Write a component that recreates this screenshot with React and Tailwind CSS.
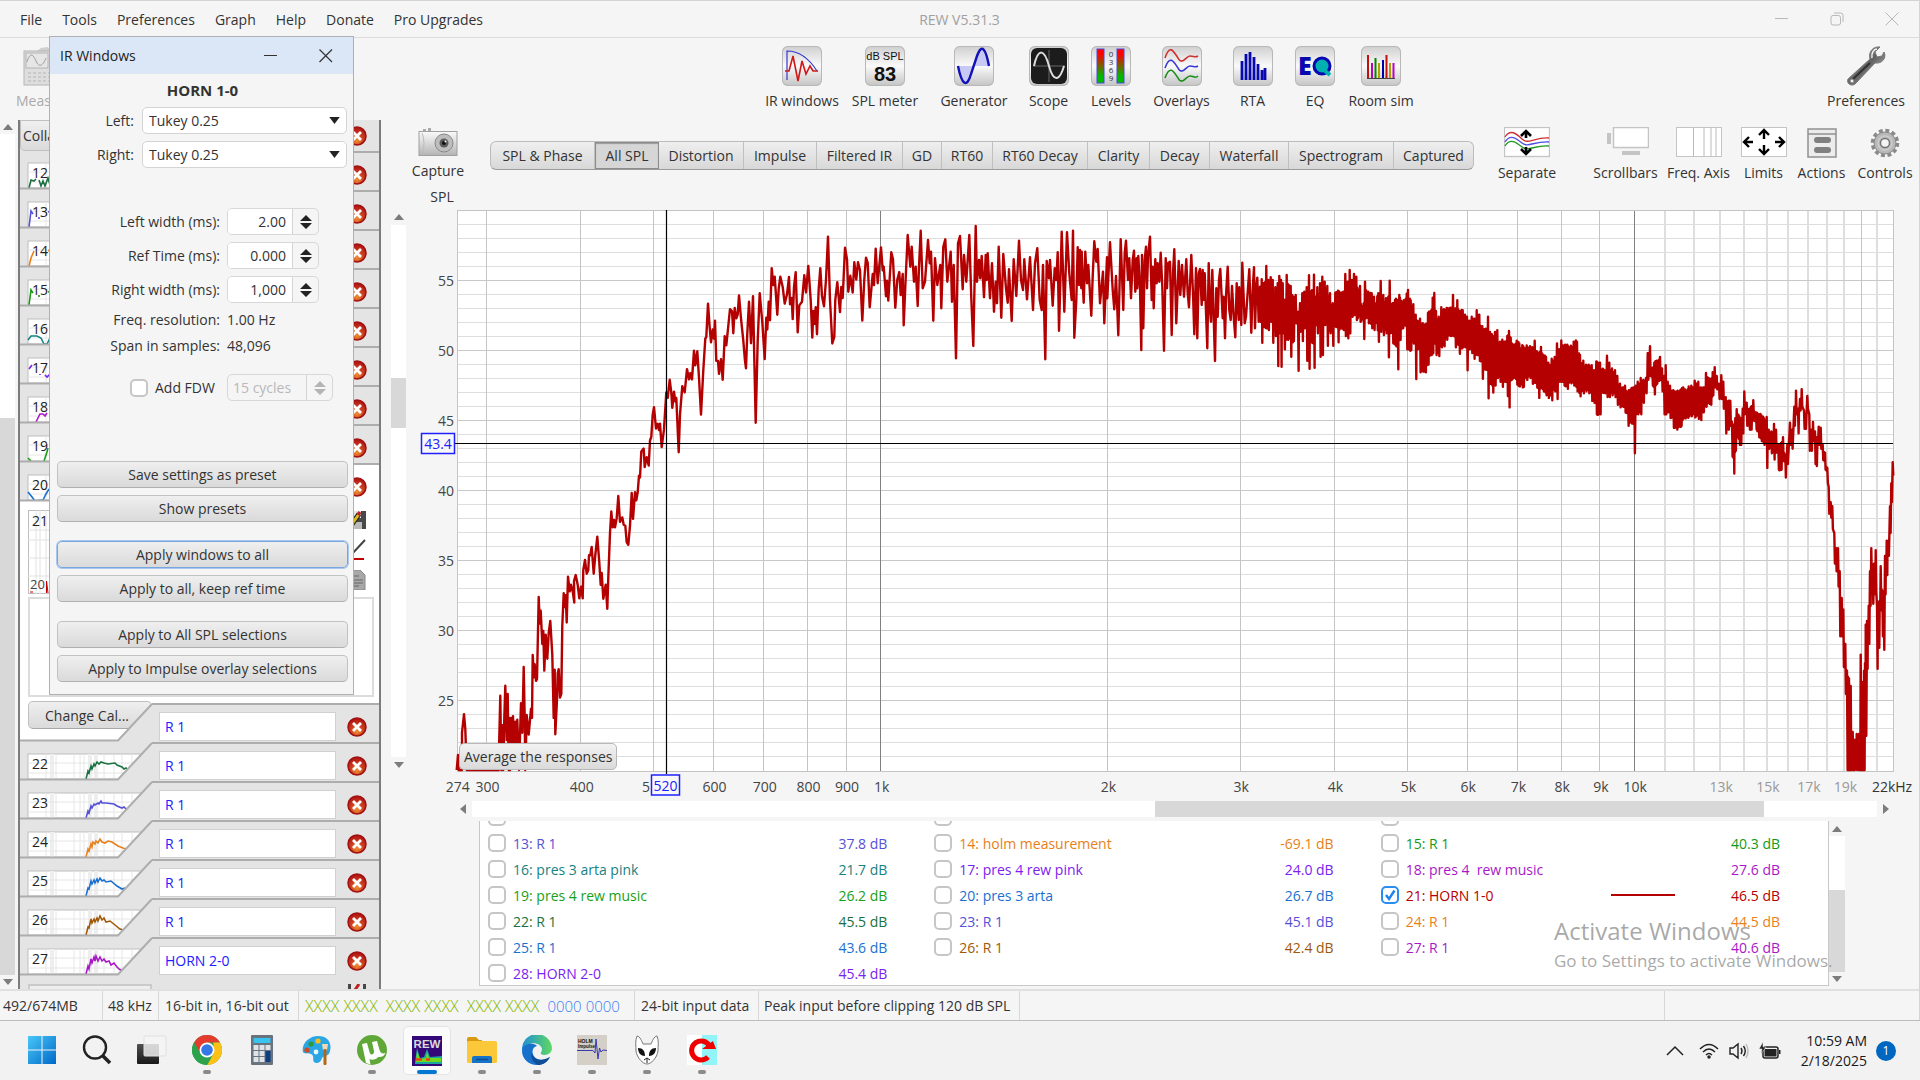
import React, { useState } from 'react';

// ----------------------------------------------------
// Data
// ----------------------------------------------------
const MENU = ['File', 'Tools', 'Preferences', 'Graph', 'Help', 'Donate', 'Pro Upgrades'];

const TABS = [
  ['SPL & Phase', 'w-[104px]'],
  ['All SPL', 'w-[64px]'],
  ['Distortion', 'w-[85px]'],
  ['Impulse', 'w-[73px]'],
  ['Filtered IR', 'w-[86px]'],
  ['GD', 'w-[39px]'],
  ['RT60', 'w-[51px]'],
  ['RT60 Decay', 'w-[95px]'],
  ['Clarity', 'w-[62px]'],
  ['Decay', 'w-[60px]'],
  ['Waterfall', 'w-[79px]'],
  ['Spectrogram', 'w-[105px]'],
  ['Captured', 'w-[79px]'],
];

const LEGEND = [
  { n: 10, color: '#00a000' },
  { n: 11, color: '#00a000' },
  { n: 12, color: '#1a7040' },
  { n: 13, name: 'R 1', db: '37.8 dB', color: '#5450d8' },
  { n: 14, name: 'holm measurement', db: '-69.1 dB', color: '#e8801a' },
  { n: 15, name: 'R 1', db: '40.3 dB', color: '#149a14' },
  { n: 16, name: 'pres 3 arta pink', db: '21.7 dB', color: '#158282' },
  { n: 17, name: 'pres 4 rew pink', db: '24.0 dB', color: '#7a22f0' },
  { n: 18, name: 'pres 4\u00a0 rew music', db: '27.6 dB', color: '#a818c8' },
  { n: 19, name: 'pres 4 rew music', db: '26.2 dB', color: '#18a018' },
  { n: 20, name: 'pres 3 arta', db: '26.7 dB', color: '#1a70d0' },
  { n: 21, name: 'HORN 1-0', db: '46.5 dB', color: '#b40000', on: true },
  { n: 22, name: 'R 1', db: '45.5 dB', color: '#1a7040' },
  { n: 23, name: 'R 1', db: '45.1 dB', color: '#5450d8' },
  { n: 24, name: 'R 1', db: '44.5 dB', color: '#e8801a' },
  { n: 25, name: 'R 1', db: '43.6 dB', color: '#1a70d0' },
  { n: 26, name: 'R 1', db: '42.4 dB', color: '#a05808' },
  { n: 27, name: 'R 1', db: '40.6 dB', color: '#a818c8' },
  { n: 28, name: 'HORN 2-0', db: '45.4 dB', color: '#7a22f0' },
];

// Thumbnail traces of the measurement list
const THUMBS_TOP = [
  { n: 12, next: 'R 1', color: '#1a7040', d: 'M11 37 L13 29 L16 30 L18 28 M21 29 L23 35 L25 30 L27 35 L30 27 L32 34' },
  { n: 13, next: 'holm measurement', color: '#5450d8', d: 'M11 37 L13 21 L15 24 M21 27 v2 M30 22 l3 -1' },
  { n: 14, next: 'R 1', color: '#e8801a', d: 'M11 37 L13 29 L16 22 M30 22 l3 -2' },
  { n: 15, next: 'pres 3 arta pink', color: '#149a14', d: 'M11 37 L13 22 L15 25 M21 27 v2 M30 24 l3 -1' },
  { n: 16, next: 'pres 4 rew pink', color: '#158282', d: 'M10 33 L13 29 L19 29 L23 31 L26 37 L29 37 L32 31' },
  { n: 17, next: 'pres 4 rew music', color: '#7a22f0', d: 'M11 23 L14 19 M22 28 v1 M27 29 L29 31 L32 28' },
  { n: 18, next: 'pres 4 rew music', color: '#a818c8', d: 'M18 37 L22 29 L25 29 L27 31 L29 28' },
  { n: 19, next: 'pres 3 arta', color: '#18a018', d: 'M10 34 L13 37 M26 37 L29 28 L30 24' },
  { n: 20, next: 'HORN 1-0', color: '#1a70d0', d: 'M10 29 L14 34 L17 38 L25 37 L28 31 L31 26', open: true },
];
const THUMBS_BOTTOM = [
  { n: 22, next: 'R 1', color: '#1a7040', d: 'M68 37 L70 29 L71 31 L73 24 L74 27 L76 22 L77 24 L79 20 L81 22 L83 20 L86 21 L90 22 L97 21 L99 23 L104 25 L106 27 L108 26 L110 28' },
  { n: 23, next: 'R 1', color: '#5450d8', d: 'M68 37 L70 30 L71 32 L73 25 L74 27 L76 23 L77 24 L80 22 L81 23 L83 20 L84 22 L88 22 L96 23 L99 25 L104 27 L106 26 L109 29' },
  { n: 24, next: 'R 1', color: '#e8801a', d: 'M68 37 L70 29 L71 31 L73 24 L74 27 L75 22 L77 24 L78 21 L80 23 L82 19 L84 22 L87 23 L90 21 L94 22 L100 26 L105 28 L108 29' },
  { n: 25, next: 'R 1', color: '#1a70d0', d: 'M68 37 L70 29 L71 30 L73 22 L74 25 L76 21 L77 24 L79 20 L80 23 L82 19 L84 22 L86 21 L88 23 L93 22 L99 27 L104 30 L107 29' },
  { n: 26, next: 'R 1', color: '#a05808', d: 'M68 37 L70 29 L71 30 L73 21 L74 25 L76 21 L77 24 L79 20 L80 23 L82 18 L84 22 L86 20 L88 24 L92 23 L97 27 L102 31 L105 32' },
  { n: 27, next: 'HORN 2-0', color: '#a818c8', d: 'M68 37 L70 29 L71 32 L73 22 L74 26 L76 20 L77 24 L78 19 L80 24 L82 20 L84 24 L86 22 L88 25 L91 24 L93 28 L96 26 L99 30 L101 32 L104 34' },
];

// ----------------------------------------------------
// Response trace. Coordinates are in thirds of a pixel.
// ----------------------------------------------------
const LOW = [50,1543,54,1500,56,1543,66,1543,66,1440,72,1390,76,1430,80,1543,84,1541,176,1543,178,1450,181,1340,184,1543,187,1420,190,1543,193,1400,196,1313,200,1460,203,1335,206,1543,208,1400,210,1543,213,1400,216,1520,219,1395,222,1520,226,1410,229,1520,232,1405,237,1543,243,1360,247,1440,251,1262,254,1400,256,1543,260,1392,266,1445,273,1375,276,1400,278,1230,282,1290,284,1255,288,1300,291,1295,296,1073,299,1145,302,1110,307,1200,310,1165,313,1272,317,1175,322,1240,326,1170,331,1138,337,1230,341,1400,344,1270,346,1444,351,1350,353,1280,356,1268,360,1345,364,1335,367,1150,371,1063,374,1100,377,1068,380,1142,384,1018,389,1058,393,1040,398,1058,403,1088,402,1030,407,1014,413,1040,418,1077,423,1045,428,1077,430,1000,435,973,440,1010,445,1000,447,960,451,960,455,938,461,1010,466,960,472,910,478,980,482,1040,485,1008,490,1078,497,1040,502,1105,505,1020,510,900,514,842,518,885,522,865,525,885,530,860,535,800,540,870,547,858,551,878,556,880,560,925,565,932,570,880,575,792,579,862,585,790,589,812,593,790,597,745,600,750,604,680,611,672,614,722,620,695,626,718,630,650,634,640,638,580,642,560,648,618,653,605,657,622,660,605,665,668,672,620,679,520,683,535,689,486,694,520,697,562,702,518,706,545,709,535,716,682,720,580,727,503,734,520,741,457,747,485,751,468,756,485,762,407,766,447,772,409,777,480,783,580,790,460,796,375,799,370,804,280,809,345,813,385,818,350,822,375,825,326,829,435,834,435,837,470,843,430,848,486,854,368,859,393,865,340,870,295,876,300,880,360,884,292,889,320,893,310,897,258,903,320,910,380,915,435,918,455,922,360,927,275,933,387,939,260,943,430,947,602,953,380,959,252,967,330,974,430,979,318,982,350,986,275,990,325,995,184,1000,230,1004,207,1012,310,1016,240,1021,207,1028,235,1034,280,1041,255,1047,208,1050,282,1055,265,1058,322,1062,235,1067,195,1073,358,1078,285,1086,275,1093,203,1098,250,1105,178,1112,270,1117,372,1120,300,1124,335,1127,290,1131,363,1136,240,1141,184,1146,260,1152,287,1158,215,1164,99,1170,270,1177,388,1183,370,1186,270,1192,222,1200,303,1204,235,1208,265,1215,129,1221,160,1225,248,1231,205,1238,250,1243,168,1249,215,1254,168,1260,190,1267,326,1273,215,1278,156,1283,170,1289,290,1298,200,1302,230,1307,132,1313,225,1323,128,1328,190,1331,180,1338,260,1341,218,1345,272,1354,141,1359,160,1366,291,1372,215,1378,195,1382,257,1388,200];

const MID = [11,376,16,260,23,105,31,200,35,140,42,245,47,200,53,318,57,200,62,92,68,265,75,245,84,120,89,190,93,155,100,362,105,175,112,255,121,195,124,325,130,140,136,118,142,245,152,155,156,305,161,195,168,475,174,130,180,108,188,268,192,165,199,245,208,105,214,295,220,438,227,78,231,245,237,180,241,235,245,168,252,292,257,165,260,240,263,160,270,295,276,190,282,335,287,245,291,310,296,140,304,353,310,162,318,265,323,308,327,208,335,363,341,178,349,288,357,122,363,240,369,270,373,178,381,298,390,172,399,330,405,190,412,145,419,300,425,330,429,195,436,478,440,183,447,235,450,180,458,317,464,205,469,240,473,157,477,392,485,95,493,335,501,97,508,220,515,300,519,92,523,413,529,300,533,142,537,255,540,150,544,265,545,155,548,250,551,308,556,155,561,250,565,195,574,347,578,230,583,124,589,185,593,147,600,310,609,215,613,370,621,172,622,295,630,127,638,270,643,328,648,228,655,406,662,118,670,330,674,160,678,122,684,240,688,175,693,295,698,180,702,152,706,275,710,175,712,265,715,168,720,262,724,450,726,165,730,385,734,180,738,140,741,265,744,170,750,110,755,300,758,200,761,325,766,178,770,250,773,190,778,245,782,158,787,260,792,452,797,175,801,265,804,190,810,185,815,405,819,220,823,148,829,370,836,183,841,285,846,195,852,290,859,178,863,280,867,322,874,165,879,280,883,403,888,205,892,415,896,220,900,207,905,315,908,210,911,300,914,220,918,335,922,445,926,190,930,330,933,365,937,210,945,483,949,265,953,350,957,240,961,207,968,355,971,290,975,415,979,270,983,200,988,330,992,360,996,258,1001,350,1006,412,1010,250,1016,360,1018,262,1024,375,1027,188,1034,370,1038,350,1048,208,1054,398,1058,270,1062,202,1065,385,1069,260,1072,233,1076,365];

// [x, top, bottom] triples: where the trace is denser than the pixels
const HIGH_A = [1080,260,365,1085,238,428,1092,250,380,1099,198,385,1105,240,390,1112,232,365,1118,240,428,1126,262,408,1133,250,498,1138,228,400,1143,240,500,1148,250,400,1153,300,448,1160,225,418,1166,255,415,1172,258,470,1180,290,423,1187,285,370,1194,335,512,1200,310,395,1207,280,423,1213,275,385,1220,262,482,1227,226,506,1233,275,425,1242,224,503,1247,290,375,1252,262,400,1260,250,470,1267,230,465,1274,245,375,1282,258,437,1290,280,400,1298,310,437,1306,278,380,1314,272,427,1322,278,385,1330,275,390,1336,222,408,1343,245,415,1349,210,400,1356,240,350,1362,222,345,1369,230,360,1380,258,365,1391,310,417,1395,245,350,1405,275,370,1415,280,385,1422,290,390,1435,280,425,1442,243,395,1450,285,405,1458,295,400,1465,290,472,1469,242,400,1478,310,430,1485,300,435,1493,300,508,1498,285,420];
const HIGH_B = [0,255,365,8,265,335,15,262,325,20,245,390,24,235,390,32,262,392,40,272,375,47,300,468,52,315,390,60,310,450,68,322,448,76,325,450,84,295,430,92,290,405,98,255,400,103,243,375,108,290,405,116,305,408,124,280,385,132,285,382,140,282,365,150,282,355,159,248,355,166,285,385,172,262,375,178,290,402,188,288,385,195,300,385,201,305,445,208,315,390,215,305,400,222,310,415,230,288,405,238,300,420,247,330,467,254,340,440,264,305,518,270,345,480,278,355,503,285,345,485,292,340,465,300,370,475,307,365,488,314,370,475,322,355,512,327,342,542,332,360,470,340,378,465,350,368,482,358,375,487,370,382,488,380,380,470,390,382,465,397,385,480,404,368,478,410,395,490,416,400,517,423,384,490,430,405,500,438,410,510,445,425,517,455,415,523,464,410,500,471,375,520,478,390,475,484,367,475,492,380,485,502,378,493,510,385,475,521,370,485,531,370,500,540,405,513,550,420,505,558,430,500,566,430,505,575,432,525,582,445,530,589,422,560,600,425,560,606,445,500,614,445,505,621,407,515,628,425,515,636,440,510,645,445,515,652,460,535,660,480,542,668,490,540,675,485,555,684,500,590,692,495,580,700,490,585,703,490,662,707,485,560,713,475,560,722,465,560,730,470,530,738,465,505,743,400,470,750,382,460,757,440,485,763,425,508,770,420,480,780,410,470,786,440,500,792,460,560,797,432,560,803,475,555,810,485,570,820,497,595,830,500,600,838,500,592,843,495,590,850,490,570,858,498,568,866,487,565,874,485,565,884,472,568,895,475,572,902,490,575,910,490,555,918,452,540,925,465,530,932,470,535,938,450,510,944,437,490,950,460,495,957,480,520,964,458,520,970,475,545,977,515,610,985,525,600,991,525,590,996,580,670,1001,590,715,1006,570,655,1010,547,620,1018,565,640,1022,570,640,1028,545,610,1033,500,560,1040,530,590,1048,545,600,1053,540,600,1060,523,575,1068,555,600,1076,560,620,1084,562,630,1092,570,640,1100,567,700,1106,600,650,1114,605,662,1122,585,678,1128,600,660,1135,640,705,1143,635,705,1149,620,680,1156,665,725,1162,640,690,1170,582,640,1176,600,650,1183,540,590,1188,498,560,1194,545,610,1200,520,550,1205,494,540,1212,550,598,1216,560,598,1222,512,545,1228,560,655,1234,600,655,1239,580,630,1245,605,690,1249,620,695,1256,592,640,1262,595,650,1268,640,680,1275,660,705,1282,700,740,1286,750,820,1292,790,830,1297,800,860,1303,870,950,1308,910,970,1314,910,1010,1319,970,1140,1325,1040,1140,1330,1070,1220,1336,1160,1290,1341,1230,1492,1347,1250,1492,1352,1270,1492,1358,1390,1492,1363,1410,1492,1370,1395,1492,1377,1395,1492,1382,1188,1492,1387,1260,1492,1392,1230,1492,1395,1210,1400,1397,1110,1400,1401,1100,1225,1406,1060,1160,1410,970,1060,1414,910,1000,1418,960,1055,1422,950,1030,1427,915,1025,1431,1060,1225,1436,1050,1170,1442,957,1070,1447,1020,1140,1451,1080,1175,1455,930,1030,1460,890,980,1465,890,930,1470,800,870,1474,740,790,1478,685,720];

const plain = (flat, ox, sy) => {
  const out = [];
  for (let i = 0; i < flat.length; i += 2) out.push([ox + flat[i] / 3, 200 + flat[i + 1] / sy]);
  return out;
};

// Zigzag between the upper and lower edge of each band
const band = (flat, ox, sy, rough) => {
  const out = [];
  for (let i = 0; i < flat.length; i += 3) {
    const [x, t, b] = [flat[i], flat[i + 1], flat[i + 2]];
    out.push([ox + x / 3, 200 + t / sy], [ox + x / 3 + 0.6, 200 + b / sy]);
    if (i + 3 < flat.length) {
      const [x2, t2, b2] = [flat[i + 3], flat[i + 4], flat[i + 5]];
      const top = Math.max(t, t2);
      const bottom = Math.min(b, b2);
      const steps = Math.max(1, Math.round((x2 - x) / 3));
      for (let k = 1; k < steps; k++) {
        const px = ox + (x + ((x2 - x) * k) / steps) / 3;
        const wob = ((i * 7 + k * 13) % 11) * rough;
        if (bottom > top) out.push([px, 200 + (top - 4 + wob) / sy], [px + 0.5, 200 + (bottom + 4 - wob) / sy]);
      }
    }
  }
  return out;
};

const TRACE = [
  ...plain(LOW, 440, 2.703),
  ...plain(MID, 900, 3),
  ...band(HIGH_A, 900, 3, 3),
  ...band(HIGH_B, 1400, 2.613, 1.2),
]
  .map(([x, y]) => `${x.toFixed(1)},${Math.min(y, 770).toFixed(1)}`)
  .join(' ');

const fx = (f) => 880.6 + Math.log10(f / 1000) * 753.7;
const dy = (db) => 280.5 + (55 - db) * 14;

// ----------------------------------------------------
// Small pieces
// ----------------------------------------------------
const Arrow = ({ dir, className = '' }) => {
  const d = { up: 'M0 8 L5 2 L10 8Z', down: 'M0 2 L5 8 L10 2Z', left: 'M8 0 L2 5 L8 10Z', right: 'M2 0 L8 5 L2 10Z' }[dir];
  return (
    <svg viewBox="0 0 10 10" className={`size-[10px] shrink-0 ${className}`} fill="currentColor">
      <path d={d} />
    </svg>
  );
};

const DeleteIcon = () => (
  <svg viewBox="0 0 20 20" className="size-5">
    <defs>
      <radialGradient id="del" cx="50%" cy="75%" r="70%">
        <stop offset="0" stopColor="#f09030" />
        <stop offset="0.5" stopColor="#cc4020" />
        <stop offset="1" stopColor="#b01414" />
      </radialGradient>
    </defs>
    <circle cx="10" cy="10" r="9" fill="url(#del)" stroke="#a01010" strokeWidth="1.500" />
    <path d="M6 6 L14 14 M14 6 L6 14" stroke="#fff" strokeWidth="2.800" />
  </svg>
);

const CheckBox = ({ id, checked, disabled }) => {
  const [on, setOn] = useState(!!checked);
  return (
    <span className="relative size-[18px] shrink-0">
      <input
        id={id}
        type="checkbox"
        checked={on}
        disabled={disabled}
        onChange={() => setOn(!on)}
        className="peer block size-[18px] appearance-none rounded-[5px] border-2 border-[#c6c6c6] bg-white checked:border-[#2a8ef0]"
      />
      <svg viewBox="0 0 18 18" className="pointer-events-none absolute inset-0 hidden size-[18px] peer-checked:block" fill="none" stroke="#1a82ee" strokeWidth="2.4">
        <path d="M5 9 L8 13 L13.5 4.5" />
      </svg>
    </span>
  );
};

const PushButton = ({ children, focus }) => (
  <button
    className={`flex h-[27px] w-full items-center justify-center rounded-[5px] border bg-linear-to-b from-[#efefef] to-[#dadada] ${
      focus ? 'border-[#7aa6e0] ring-1 ring-[#a8c6ee]' : 'border-[#c2c2c2] border-b-[#b0b0b0]'
    }`}
  >
    {children}
  </button>
);

const WindowSelect = ({ id, label }) => (
  <div className="flex h-[27px] items-center">
    <label htmlFor={id} className="w-[86px] pr-[2px] text-right">{label}</label>
    <div className="relative ml-[6px] h-[27px] w-[205px]">
      <select id={id} defaultValue="Tukey 0.25" className="h-[27px] w-full appearance-none rounded-[5px] border border-[#d4d4d4] bg-white pl-[6px] outline-none">
        <option>Tukey 0.25</option>
        <option>Hann</option>
        <option>Rectangular</option>
      </select>
      <svg viewBox="0 0 12 8" className="pointer-events-none absolute top-[10px] right-[7px] h-[7px] w-[11px]"><path d="M0 0 H12 L6 8Z" fill="#222" /></svg>
    </div>
  </div>
);

const Spinner = ({ id, value, wide, disabled }) => (
  <div className={`flex h-[27px] overflow-hidden rounded-[5px] border border-[#d8d8d8] ${wide ? 'w-[106px] text-[#b8b8b8]' : 'w-[92px]'}`}>
    <input
      id={id}
      defaultValue={value}
      disabled={disabled}
      aria-label={wide ? 'Cycles' : undefined}
      className={`min-w-0 flex-1 border-r border-[#d4d4d4] outline-none ${wide ? 'bg-transparent pl-[5px]' : 'bg-white pr-[6px] text-right'}`}
    />
    <button aria-label="Step" disabled={disabled} className="flex w-[25px] items-center justify-center">
      <svg viewBox="0 0 12 16" className="h-[16px] w-[12px]" fill={disabled ? '#b4b4b4' : '#222'}>
        <path d="M0 7 L6 1 L12 7Z M0 9 L6 15 L12 9Z" />
      </svg>
    </button>
  </div>
);

// ----------------------------------------------------
// IR Windows dialog
// ----------------------------------------------------
const IrDialog = () => (
  <section className="absolute top-[36px] left-[49px] w-[305px] border border-[#b0b0b0] bg-[#f5f5f5] pb-[12px]">
    <header className="flex h-[37px] items-center bg-[#dbe7f6] pl-[10px] text-[#222]">
      <h2 className="flex-1">IR Windows</h2>
      <button aria-label="Minimize" className="flex w-[55px] justify-center">
        <svg viewBox="0 0 14 14" className="size-[14px]" stroke="#333"><path d="M0 6.5 H13" /></svg>
      </button>
      <button aria-label="Close" className="flex w-[55px] justify-center">
        <svg viewBox="0 0 14 14" className="size-[14px]" stroke="#333" strokeWidth="1.2"><path d="M0.5 0.5 L13 13 M13 0.5 L0.5 13" /></svg>
      </button>
    </header>
    <h3 className="mt-[6px] h-[20px] pl-[2px] text-center text-[15px] leading-[20px] font-bold">HORN 1-0</h3>
    <div className="mt-[7px] flex flex-col gap-[7px]">
      <WindowSelect id="win-left" label="Left:" />
      <WindowSelect id="win-right" label="Right:" />
    </div>
    <div className="mt-[40px] grid grid-cols-[170px_auto] items-center justify-start gap-x-[7px] gap-y-[7px]">
      <label htmlFor="lw" className="text-right">Left width (ms):</label>
      <Spinner id="lw" value="2.00" />
      <label htmlFor="rt" className="text-right">Ref Time (ms):</label>
      <Spinner id="rt" value="0.000" />
      <label htmlFor="rw" className="text-right">Right width (ms):</label>
      <Spinner id="rw" value="1,000" />
    </div>
    <dl className="mt-[4px] grid grid-cols-[170px_auto] justify-start gap-x-[7px] leading-[26px]">
      <dt className="text-right">Freq. resolution:</dt>
      <dd>1.00 Hz</dd>
      <dt className="text-right">Span in samples:</dt>
      <dd>48,096</dd>
    </dl>
    <div className="mt-[15px] flex items-center pl-[80px]">
      <CheckBox id="fdw" />
      <label htmlFor="fdw" className="w-[79px] pl-[7px]">Add FDW</label>
      <Spinner id="cycles" value="15 cycles" wide disabled />
    </div>
    <div className="mt-[60px] flex flex-col gap-[19px] pr-[5px] pl-[7px]">
      <div className="flex flex-col gap-[7px]">
        <PushButton>Save settings as preset</PushButton>
        <PushButton>Show presets</PushButton>
      </div>
      <div className="flex flex-col gap-[7px]">
        <PushButton focus>Apply windows to all</PushButton>
        <PushButton>Apply to all, keep ref time</PushButton>
      </div>
      <div className="flex flex-col gap-[7px]">
        <PushButton>Apply to All SPL selections</PushButton>
        <PushButton>Apply to Impulse overlay selections</PushButton>
      </div>
    </div>
  </section>
);

// ----------------------------------------------------
// Toolbar
// ----------------------------------------------------
const TOOLS = [
  ['IR windows', 'w-[76px]', (
    <g fill="none" strokeWidth="1.6">
      <path d="M5 34 V5 C18 5 28 14 35 25" stroke="#3838d0" strokeWidth="1.2" />
      <path d="M3 25 H7 L11 10 L16 35 L20 15 L24 28 L28 20 L31 25 H36" stroke="#d01818" />
    </g>
  )],
  ['SPL meter', 'w-[90px]', (
    <g textAnchor="middle" fill="#111">
      <text x="20" y="14" fontSize="11" fontFamily="Liberation Sans">dB SPL</text>
      <text x="20" y="35" fontSize="20" fontWeight="700" fontFamily="Liberation Sans">83</text>
    </g>
  )],
  ['Generator', 'w-[88px]', (
    <g>
      <path d="M4 20 C8 40 12 42 16 30 L20 20 Z M20 20 L24 10 C28 -4 33 4 35 20Z" fill="#c8c8f4" />
      <path d="M4 20 C8 40 13 42 17 28 L23 10 C28 -4 32 4 35 20" fill="none" stroke="#1010b8" strokeWidth="2.4" />
    </g>
  )],
  ['Scope', 'w-[61px]', (
    <g fill="none">
      <rect x="2" y="2" width="36" height="36" rx="6" fill="#1c1c1c" />
      <path d="M20 4 V36 M4 20 H36" stroke="#666" />
      <path d="M5 20 C9 2 15 2 20 20 C25 38 31 34 35 20" stroke="#ddd" strokeWidth="2" />
    </g>
  )],
  ['Levels', 'w-[64px]', (
    <g>
      <defs>
        <linearGradient id="lvl" x1="0" y1="0" x2="0" y2="1">
          <stop offset="0.15" stopColor="#ff0000" />
          <stop offset="0.8" stopColor="#00b800" />
        </linearGradient>
      </defs>
      <rect x="6" y="3" width="7" height="34" fill="url(#lvl)" stroke="#4848e0" />
      <rect x="26" y="3" width="7" height="34" fill="url(#lvl)" stroke="#4848e0" />
      <g fontSize="8" textAnchor="middle" fill="#333">
        <text x="20" y="11">0</text><text x="20" y="19">3</text><text x="20" y="27">6</text><text x="20" y="35">9</text>
      </g>
    </g>
  )],
  ['Overlays', 'w-[77px]', (
    <g fill="none" strokeWidth="1.6">
      <path d="M3 12 C8 -3 12 6 16 12 C20 20 24 10 28 10 S33 12 36 10" stroke="#d03030" />
      <path d="M3 22 C8 8 12 16 16 22 C20 30 24 20 28 20 S33 22 36 20" stroke="#3838d8" />
      <path d="M3 32 C8 18 12 26 16 32 C20 40 24 30 28 30 S33 33 36 30" stroke="#189018" />
    </g>
  )],
  ['RTA', 'w-[65px]', (
    <path d="M9 34 V15 M13 34 V8 M17 34 V6 M21 34 V11 M25 34 V18 M29 34 V24 M32 34 V22" stroke="#0808b0" strokeWidth="2.8" />
  )],
  ['EQ', 'w-[60px]', (
    <g>
      <circle cx="27" cy="20" r="8" fill="#00b0b0" stroke="#0808b0" strokeWidth="3" />
      <path d="M29 24 L35 29" stroke="#00b0b0" strokeWidth="4" />
      <text x="3" y="29" fontSize="25" fontWeight="800" fill="#0808b0">E</text>
    </g>
  )],
  ['Room sim', 'w-[72px]', (
    <g strokeWidth="2">
      <path d="M7 32 V9 M25.500 32 V9" stroke="#c01010" />
      <path d="M11 32 V17 M32.500 32 V17" stroke="#c000c0" />
      <path d="M14.500 32 V12" stroke="#008800" />
      <path d="M18 32 V17 M29 32 V17" stroke="#b0a000" />
      <path d="M22 32 V14" stroke="#0000a8" />
      <path d="M6 32.500 H34" stroke="#444" strokeWidth="1" />
    </g>
  )],
];

const ToolBar = () => (
  <div className="flex h-[82px] shrink-0 items-start pt-[8px]">
    <div className="w-[764px] pl-[16px] text-[#aaa]">
      <button className="flex flex-col items-start" disabled>
        <svg viewBox="0 0 40 40" className="ml-[7px] size-10" fill="#dedede" stroke="#b4b4b4">
          <path d="M14 5 L18 2 L24 1 L28 3 L34 1 L38 8 L36 20 L20 18Z" fill="#cfcfcf" stroke="none" />
          <rect x="1" y="5" width="38" height="34" />
          <rect x="3" y="7" width="22" height="15" fill="#e6e6e6" />
          <path d="M4 16 C7 6 10 8 13 15 S20 20 23 12" fill="none" stroke="#999" />
          <path d="M5 27 H30 M5 31 H30 M5 35 H30" strokeDasharray="3 2" />
        </svg>
        <span className="mt-[5px] leading-[20px]">Measure</span>
      </button>
    </div>
    <div className="flex">
      {TOOLS.map(([label, width, art]) => (
        <button key={label} className={`flex shrink-0 flex-col items-center whitespace-nowrap ${width}`}>
          <span className="size-10 rounded-[6px] bg-linear-to-b from-[#cfcfcf] via-[#fafafa] to-[#c4c4c4] shadow-[inset_0_0_0_1px_#b8b8b8]">
            <svg viewBox="0 0 40 40" className="size-10">{art}</svg>
          </span>
          <span className="mt-[5px] leading-[20px]">{label}</span>
        </button>
      ))}
    </div>
    <button className="mr-[14px] ml-auto flex flex-col items-center">
      <svg viewBox="0 0 40 40" className="size-10">
        <defs>
          <linearGradient id="steel" x1="0" y1="0" x2="1" y2="1">
            <stop offset="0" stopColor="#e8e8e8" />
            <stop offset="0.5" stopColor="#606060" />
            <stop offset="1" stopColor="#d8d8d8" />
          </linearGradient>
        </defs>
        <path d="M2 33 L24 13 C22 6 27 0 34 1 L29 6 L31 11 L36 10 L38 6 C41 12 36 18 29 17 L9 38 C5 41 0 37 2 33Z" fill="url(#steel)" stroke="#777" />
        <path d="M7 33 L24 17" stroke="#333" strokeWidth="2" />
        <path d="M26 12 C25 7 28 3 31 3" stroke="#f4f4f4" strokeWidth="1.500" fill="none" />
        <circle cx="6" cy="35" r="2" fill="#f5f5f5" stroke="#777" />
      </svg>
      <span className="mt-[5px] leading-[20px]">Preferences</span>
    </button>
  </div>
);

// ----------------------------------------------------
// Measurement list
// ----------------------------------------------------
const ThumbGrid = ({ x = 10, y, h }) => (
  <g>
    <rect x={x} y={y} width="124" height={h} fill="#fff" stroke="#bdbdbd" />
    <path d={`M28 ${y} v${h} M38 ${y} v${h} M56 ${y} v${h} M62 ${y} v${h} M66 ${y} v${h} M86 ${y} v${h} M96 ${y} v${h} M104 ${y} v${h} M114 ${y} v${h}`} stroke="#e6e6e6" />
    <path d={`M34 ${y} v${h} M72 ${y} v${h} M78 ${y} v${h}`} stroke="#eeeeee" strokeWidth="4" />
    <path d={`M${x} ${y + 9} h124 M${x} ${y + 19} h124`} stroke="#e6e6e6" />
  </g>
);

const NameField = ({ name }) => (
  <>
    <input aria-label="Measurement name" defaultValue={name} className="h-[29px] w-[177px] border border-[#d0d0d0] bg-white pl-[5px] text-[#2020ff] outline-none" />
    <button aria-label="Delete" className="mt-[5px] ml-[11px] size-5"><DeleteIcon /></button>
  </>
);

const MeasurementRow = ({ item }) => (
  <div className="flex h-[39px] shrink-0">
    <svg viewBox="2 0 132 39" className="h-[39px] w-[132px] shrink-0">
      <ThumbGrid y={12} h={25} />
      <path d={item.d} fill="none" stroke={item.color} strokeWidth="1.6" />
      <text x="14" y="27" fontSize="14" fill="#222">{item.n}</text>
      <path d="M100 37 L134 1 V39 H0 V37Z" fill={item.open ? '#fff' : '#e4e4e4'} />
      <path d="M0 37.500 H100 L134 1" fill="none" stroke="#adadad" strokeWidth="2" />
    </svg>
    <div className={`flex flex-1 border-t-2 border-[#adadad] pt-[7px] pl-[7px] ${item.open ? 'bg-white' : ''}`}>
      <NameField name={item.next} />
    </div>
  </div>
);

const MeasurementList = () => (
  <aside className="flex w-[363px] shrink-0 flex-col overflow-hidden border-x-2 border-[#7c7c7c] bg-[#e4e4e4]">
    <div className="flex h-[31px] shrink-0">
      <button className="h-[31px] w-[132px] rounded-b-[5px] border border-[#c0c0c0] bg-linear-to-b from-[#f0f0f0] to-[#dadada] pl-[2px] text-left">Collapse</button>
      <button aria-label="Delete" className="mt-[6px] ml-[195px] size-5 shrink-0"><DeleteIcon /></button>
    </div>
    {THUMBS_TOP.map((t) => <MeasurementRow key={t.n} item={t} />)}
    <div className="flex h-[197px] shrink-0 flex-col bg-white pl-[8px]">
      <div className="flex h-[95px] pt-[8px]">
        <svg viewBox="10 0 124 84" className="h-[84px] w-[124px] shrink-0">
          <rect x="10.500" y="0.500" width="123" height="83" fill="#fff" stroke="#bdbdbd" />
          <path d="M18 0 V84 M22 0 V84 M28 0 V84 M32 0 V84 M10 20 H134 M10 30 H134 M10 48 H134 M10 66 H134" stroke="#e2e2e2" />
          <text x="14" y="16" fontSize="14" fill="#222">21</text>
          <text x="12" y="79" fontSize="13" fill="#444">20</text>
          <path d="M28.500 83 V71 L30 83 M12 82 h3" stroke="#c00000" fill="none" />
        </svg>
        <div className="ml-[195px] flex flex-col gap-[9px]">
          <svg viewBox="0 0 20 20" className="size-5">
            <path d="M1 1 H19 V19 H3 L1 17Z" fill="#484848" />
            <rect x="5" y="1" width="9" height="7" fill="#e6e6e6" />
            <rect x="5" y="12" width="10" height="7" fill="#bbb" />
            <path d="M3 17 L12 4" stroke="#222" strokeWidth="5" />
            <path d="M3 17 L12 4" stroke="#e0b820" strokeWidth="3" />
            <path d="M11 5 L13 2" stroke="#c02020" strokeWidth="3.500" />
          </svg>
          <svg viewBox="0 0 20 22" className="h-[22px] w-5" fill="none">
            <path d="M2 20 H17" stroke="#c00000" strokeWidth="2" />
            <path d="M4 16 L18 1" stroke="#444" strokeWidth="2" />
          </svg>
          <svg viewBox="0 0 20 20" className="size-5">
            <path d="M2 0 H13 L18 5 V20 H2Z" fill="#a8a8a8" stroke="#888" />
            <path d="M4 6 H12 M4 10 H16 M4 13 H16 M4 16 H12" stroke="#666" />
          </svg>
        </div>
      </div>
      <textarea aria-label="Notes" className="mr-[5px] h-[100px] resize-none border-2 border-[#dcdcdc] bg-white outline-none" />
    </div>
    <div className="flex h-[43px] shrink-0">
      <div className="relative w-[132px] shrink-0 bg-white pt-[2px] pl-[8px]">
        <button className="h-[28px] w-[124px] rounded-[5px] border border-[#c0c0c0] border-b-[#a8a8a8] bg-linear-to-b from-[#efefef] to-[#dadada] pl-[16px] text-left">Change Cal...</button>
        <svg viewBox="2 0 132 43" className="pointer-events-none absolute inset-0 h-[43px] w-[132px]">
          <path d="M100 41 L134 5 V43 H0 V41Z" fill="#e4e4e4" />
          <path d="M0 41.500 H100 L134 5" fill="none" stroke="#adadad" strokeWidth="2" />
        </svg>
      </div>
      <div className="flex-1 bg-white pt-[4px]">
        <div className="flex h-[39px] border-t-2 border-[#adadad] bg-[#e4e4e4] pt-[7px] pl-[7px]">
          <NameField name="R 1" />
        </div>
      </div>
    </div>
    {THUMBS_BOTTOM.map((t) => <MeasurementRow key={t.n} item={t} />)}
    <div className="flex shrink-0 items-start pt-[8px] pl-[8px]">
      <div className="h-[20px] w-[124px] border-2 border-[#cacaca] bg-[#eee]" />
      <svg viewBox="0 0 20 20" className="ml-[195px] size-5">
        <path d="M1 0 H4 V19 H1Z M16 0 H19 V19 H16Z" fill="#484848" />
        <rect x="5" y="0" width="9" height="7" fill="#e6e6e6" />
        <path d="M8 6 L12 0" stroke="#c02020" strokeWidth="3" />
      </svg>
    </div>
  </aside>
);

// ----------------------------------------------------
// Graph
// ----------------------------------------------------
const X_MAJOR = [300, 400, 500, 600, 700, 800, 900, 2000, 3000, 4000, 5000, 6000, 7000, 8000, 9000, 20000];
const X_MINOR = [11000, 12000, 13000, 14000, 15000, 16000, 17000, 18000, 19000, 21000];
const X_LABELS = [
  [274, '274'], [300, '300'], [400, '400'], [600, '600'], [700, '700'], [800, '800'], [900, '900'],
  [1000, '1k'], [2000, '2k'], [3000, '3k'], [4000, '4k'], [5000, '5k'], [6000, '6k'], [7000, '7k'], [8000, '8k'], [9000, '9k'], [10000, '10k'],
];
const X_SOFT = [[13000, '13k'], [15000, '15k'], [17000, '17k'], [19000, '19k']];

const Chart = () => (
  <svg viewBox="406 185 1513 615" className="block h-auto w-full" fontSize="14">
    <rect x="457" y="210" width="1436" height="561" fill="#fff" />
    <g shapeRendering="crispEdges">
      {X_MINOR.map((f) => <path key={f} d={`M${Math.round(fx(f))} 210 V771`} stroke="#dedede" strokeWidth="1.500" />)}
      {Array.from({ length: 39 }, (_, i) => 59 - i).map((db) => (
        <path key={db} d={`M457 ${dy(db)} H1893`} stroke={db % 5 ? '#dedede' : '#c8c8c8'} />
      ))}
      {X_MAJOR.map((f) => <path key={f} d={`M${Math.floor(fx(f)) + 0.5} 210 V771`} stroke="#c4c4c4" />)}
      <path d="M880.500 210 V771 M1634.500 210 V771" stroke="#808080" />
      <rect x="457" y="210" width="1436" height="561" fill="none" stroke="#c4c4c4" />
    </g>
    <polyline points={TRACE} fill="none" stroke="#b40000" strokeWidth="2.400" strokeLinejoin="round" />
    <path d="M455 443.500 H1893 M666.500 210 V774" stroke="#000" strokeWidth="1.200" />
    <text x="442" y="202" textAnchor="middle" fill="#333">SPL</text>
    <g fill="#444">
      {[55, 50, 45, 40, 35, 30, 25].map((db) => <text key={db} x="454" y={dy(db) + 5.5} textAnchor="end">{db}</text>)}
      {X_LABELS.map(([f, t]) => <text key={t} x={fx(f) + 1} y="792" textAnchor="middle">{t}</text>)}
      <text x="646" y="792" textAnchor="middle">5</text>
      <text x="1892" y="792" textAnchor="middle" fill="#333">22kHz</text>
    </g>
    <g fill="#999">
      {X_SOFT.map(([f, t]) => <text key={t} x={fx(f) + 1} y="792" textAnchor="middle">{t}</text>)}
    </g>
    <g fill="#f8f8f8" stroke="#2020ff" strokeWidth="1.500">
      <rect x="421.500" y="433.500" width="33" height="20" />
      <rect x="651.500" y="775" width="28" height="20" />
    </g>
    <g fill="#2020ff" textAnchor="middle">
      <text x="438" y="449">43.4</text>
      <text x="665.500" y="791">520</text>
    </g>
  </svg>
);

const GRAPH_TOOLS = [
  ['Separate', 'w-[70px]', 'mr-[27px]', (
    <g fill="none" strokeWidth="1.300">
      <rect x="0.500" y="0.500" width="45" height="29" fill="#fff" stroke="#c4c4c4" />
      <path d="M1 10 C6 2 12 6 18 12 S30 10 45 11" stroke="#d03030" />
      <path d="M1 15 C6 7 12 11 18 16 S30 14 45 15" stroke="#5050e0" />
      <path d="M1 19 C6 11 12 15 18 20 S30 18 45 19" stroke="#209820" />
      <path d="M22 11 V5 M17 9 L22 4 L27 9 M22 20 V26 M17 22 L22 27 L27 22" stroke="#000" strokeWidth="2.600" />
    </g>
  )],
  ['Scrollbars', 'w-[73px]', '', (
    <g>
      <rect x="10.500" y="0.500" width="35" height="20" fill="#fff" stroke="#c4c4c4" strokeWidth="1.500" />
      <path d="M4 6 h4 v11 h-4Z M19 24 h18 v4 h-18Z" fill="#c4c4c4" />
    </g>
  )],
  ['Freq. Axis', 'w-[73px]', '', (
    <g>
      <rect x="0.500" y="0.500" width="45" height="29" fill="#fff" stroke="#c4c4c4" />
      <path d="M17.500 0 V30 M28 0 V30 M35 0 V30 M40 0 V30" stroke="#bbb" />
    </g>
  )],
  ['Limits', 'w-[57px]', '', (
    <g fill="none">
      <rect x="0.500" y="0.500" width="45" height="29" fill="#fff" stroke="#c4c4c4" />
      <path d="M23 12 V4 M18 8 L23 3 L28 8 M23 18 V26 M18 22 L23 27 L28 22 M12 15 H4 M8 10 L3 15 L8 20 M34 15 H42 M38 10 L43 15 L38 20" stroke="#000" strokeWidth="2.400" />
    </g>
  )],
  ['Actions', 'w-[59px]', '', (
    <g>
      <rect x="9" y="2" width="28" height="28" fill="#ececec" stroke="#909090" strokeWidth="1.500" />
      <path d="M9 7 H37" stroke="#909090" strokeWidth="1.500" />
      <rect x="15" y="10" width="17" height="6" rx="3" fill="#808080" />
      <rect x="15" y="20" width="17" height="6" rx="3" fill="#808080" />
    </g>
  )],
  ['Controls', 'w-[68px]', '', (
    <g>
      <circle cx="23" cy="16" r="12.500" fill="none" stroke="#8a8a8a" strokeWidth="3.500" strokeDasharray="3.900 2.640" />
      <circle cx="23" cy="16" r="11" fill="#b8b8b8" stroke="#888" />
      <circle cx="23" cy="16" r="7" fill="none" stroke="#ccc" strokeWidth="1.500" />
      <circle cx="23" cy="16" r="4.500" fill="#f5f5f5" stroke="#777" strokeWidth="1.500" />
    </g>
  )],
];

const GraphHeader = () => (
  <div className="flex h-[65px] shrink-0 items-start pl-[24px]">
    <button className="mt-[8px] flex w-[66px] flex-col items-center">
      <svg viewBox="0 0 40 28" className="h-[28px] w-[40px]">
        <defs>
          <linearGradient id="cam" x1="0" y1="0" x2="0" y2="1">
            <stop offset="0" stopColor="#fafafa" />
            <stop offset="1" stopColor="#b4b4b4" />
          </linearGradient>
        </defs>
        <path d="M5 1 h3 v2 h-3Z M10 0 h3 v3 h-3Z" fill="#aaa" />
        <rect x="1" y="3.500" width="38" height="24" fill="url(#cam)" stroke="#a0a0a0" />
        <path d="M4 5 Q8 15 4 26" fill="none" stroke="#bbb" />
        <circle cx="26" cy="15" r="9" fill="#bdbdbd" stroke="#888" />
        <circle cx="26" cy="15" r="4.500" fill="#5c5c5c" />
        <circle cx="26" cy="15" r="2" fill="#111" />
        <circle cx="27.500" cy="13.500" r="1" fill="#fff" />
      </svg>
      <span className="mt-[5px] leading-[20px]">Capture</span>
    </button>
    <nav className="mt-[21px] ml-[19px] flex h-[29px] overflow-hidden rounded-[6px] border border-[#bcbcbc] border-b-[#9c9c9c] bg-linear-to-b from-[#efefef] to-[#d8d8d8]">
      {TABS.map(([t, width]) => (
        <button
          key={t}
          className={`shrink-0 whitespace-nowrap ${width} ${t === 'All SPL' ? 'border border-[#8c8c8c] bg-[#d6d6d6] shadow-[inset_0_1px_1px_#999]' : 'border-r border-[#c0c0c0] last:border-r-0'}`}
        >
          {t}
        </button>
      ))}
    </nav>
    <div className="mt-[7px] ml-auto flex">
      {GRAPH_TOOLS.map(([label, width, gap, art]) => (
        <button key={label} className={`flex shrink-0 flex-col items-center whitespace-nowrap ${width} ${gap}`}>
          <svg viewBox="0 0 46 32" className="h-[32px] w-[46px]">{art}</svg>
          <span className="mt-[4px] leading-[20px]">{label}</span>
        </button>
      ))}
    </div>
  </div>
);

const Legend = () => (
  <div className="mt-[4px] mb-[3px] ml-[98px] flex min-h-0 flex-1 pr-[74px]">
    <div className="flex-1 overflow-hidden border border-t-0 border-[#c8c8c8] bg-white pr-[5px] pl-[4px]">
      <div className="-mt-[18px] grid auto-rows-[26px] grid-cols-3 pt-px">
        {LEGEND.map((m) => (
          <div key={m.n} className="flex h-[26px] items-center pl-[4px]" style={{ color: m.color }}>
            <CheckBox id={`m${m.n}`} checked={m.on} />
            {m.name && <label htmlFor={`m${m.n}`} className="pl-[7px] whitespace-nowrap">{m.n}: {m.name}</label>}
            {m.on && <span className="mr-[42px] ml-auto h-[2px] w-[64px] bg-[#b40000]" />}
            {m.name && <span className={`mr-[43px] w-[63px] text-right ${m.on ? '' : 'ml-auto'}`}>{m.db}</span>}
          </div>
        ))}
      </div>
    </div>
    <div className="flex w-[16px] flex-col items-center text-[#7c7c7c]">
      <Arrow dir="up" className="mt-[3px] mb-[2px]" />
      <div className="flex w-full flex-1 flex-col bg-white">
        <div className="mt-auto h-[82px] bg-[#d8d8d8]" />
      </div>
      <Arrow dir="down" className="my-[2px]" />
    </div>
  </div>
);

const GraphPane = () => (
  <main className="flex min-w-0 flex-1 flex-col">
    <GraphHeader />
    <div className="flex shrink-0">
      <div className="mt-[26px] mb-[30px] ml-[10px] flex w-[15px] shrink-0 flex-col items-center text-[#7c7c7c]">
        <Arrow dir="up" className="mt-px mb-[3px]" />
        <div className="w-full flex-1 bg-white">
          <div className="mt-[153px] h-[50px] bg-[#d8d8d8]" />
        </div>
        <Arrow dir="down" className="mt-[3px]" />
      </div>
      <div className="relative min-w-0 flex-1">
        <Chart />
        <button className="absolute bottom-[30px] left-[53px] h-[27px] rounded-[5px] border border-[#b8b8b8] bg-linear-to-b from-[#f2f2f2] to-[#dadada] px-[4px] whitespace-nowrap">
          Average the responses
        </button>
      </div>
    </div>
    <div className="mt-px mr-[28px] ml-[77px] flex h-[16px] shrink-0 items-center gap-[4px] text-[#7c7c7c]">
      <Arrow dir="left" />
      <div className="flex h-[16px] flex-1 bg-white">
        <div className="ml-auto h-full w-[609px] bg-[#d8d8d8]" />
        <div className="w-[113px]" />
      </div>
      <Arrow dir="right" />
    </div>
    <Legend />
  </main>
);

// ----------------------------------------------------
// Status bar
// ----------------------------------------------------
const Bits = ({ a, b }) => (
  <span className="flex gap-[4px]"><span>{a}</span><span>{b}</span></span>
);

const StatusBar = () => (
  <footer className="flex h-[31px] shrink-0 items-stretch border-t-2 border-[#e0e0e0] leading-[30px] whitespace-nowrap">
    <span className="w-[103px] shrink-0 border-r border-[#d8d8d8] pl-[3px]">492/674MB</span>
    <span className="w-[56px] shrink-0 border-r border-[#d8d8d8] pl-[5px]">48 kHz</span>
    <span className="w-[140px] shrink-0 border-r border-[#d8d8d8] pl-[6px]">16-bit in, 16-bit out</span>
    <span className="flex w-[336px] shrink-0 gap-[8px] border-r border-[#d8d8d8] pl-[6px] text-[16px] font-light text-[#84b800]">
      <Bits a="XXXX" b="XXXX" />
      <Bits a="XXXX" b="XXXX" />
      <Bits a="XXXX" b="XXXX" />
      <span className="text-[15px] text-[#4080f0]"><Bits a="0000" b="0000" /></span>
    </span>
    <span className="w-[124px] shrink-0 border-r border-[#d8d8d8] pl-[6px]">24-bit input data</span>
    <span className="w-[261px] shrink-0 border-r border-[#d8d8d8] pl-[5px]">Peak input before clipping 120 dB SPL</span>
    <span className="ml-auto w-[255px] border-l border-[#d8d8d8]" />
  </footer>
);

// ----------------------------------------------------
// Taskbar
// ----------------------------------------------------
const APPS = [
  { name: 'Start', art: (
    <g>
      <defs><linearGradient id="win" x1="0" y1="0" x2="1" y2="1"><stop offset="0" stopColor="#48c8f8" /><stop offset="1" stopColor="#0068c8" /></linearGradient></defs>
      <path d="M1 1 H14.500 V14.500 H1Z M15.500 1 H29 V14.500 H15.500Z M1 15.500 H14.500 V29 H1Z M15.500 15.500 H29 V29 H15.500Z" fill="url(#win)" />
    </g>
  ) },
  { name: 'Search', art: <g fill="none" stroke="#222"><circle cx="13" cy="12.500" r="11" strokeWidth="2.400" /><path d="M20.500 20.500 L28 28" strokeWidth="3.500" /></g> },
  { name: 'Task view', art: (
    <g>
      <defs><linearGradient id="tv" x1="0" y1="0" x2="0" y2="1"><stop offset="0" stopColor="#505050" /><stop offset="1" stopColor="#181818" /></linearGradient></defs>
      <rect x="0" y="9" width="22" height="20" rx="1" fill="url(#tv)" />
      <rect x="7" y="1" width="22" height="20" rx="1" fill="#f4f4f4" fillOpacity="0.820" stroke="#e0e0e0" />
    </g>
  ) },
  { name: 'Chrome', run: true, art: (
    <g>
      <circle cx="15" cy="15" r="15" fill="#34a853" />
      <path d="M2 7.500 A15 15 0 0 1 28 7.500 H15 L8.500 18.750Z" fill="#e33b2e" />
      <path d="M28 7.500 A15 15 0 0 1 15 30 L21.500 18.750 L21.500 7.500Z" fill="#fbc116" />
      <path d="M2 7.500 L8.500 18.750 L15 22.500 L19 23 L15 30 A15 15 0 0 1 2 7.500Z" fill="#2da24c" />
      <circle cx="15" cy="15" r="7.500" fill="#fff" />
      <circle cx="15" cy="15" r="5.800" fill="#3478e8" />
    </g>
  ) },
  { name: 'Calculator', art: (
    <g>
      <rect x="4" y="0" width="22" height="30" rx="1" fill="#68737e" />
      <rect x="6.500" y="3" width="17" height="5" fill="#38c4f0" />
      <g fill="#dfe3e8">
        <rect x="6.500" y="10" width="5" height="5" /><rect x="12.500" y="10" width="5" height="5" /><rect x="18.500" y="10" width="5" height="5" />
        <rect x="6.500" y="16" width="5" height="5" /><rect x="12.500" y="16" width="5" height="5" />
        <rect x="6.500" y="22" width="5" height="5" /><rect x="12.500" y="22" width="5" height="5" />
      </g>
      <rect x="18.500" y="16" width="5" height="11" fill="#0c3f80" />
    </g>
  ) },
  { name: 'Paint', art: (
    <g>
      <path d="M16 1 C26 1 30 8 28 16 C27 22 22 20 20 23 C19 28 14 29 12 27 C10 25 13 21 9 19 C5 17 3 20 1 17 C-1 9 7 1 16 1Z" fill="#2aa6e4" />
      <circle cx="5" cy="15" r="2.600" fill="#d04a20" /><circle cx="9" cy="9" r="2.600" fill="#2a9a3a" /><circle cx="16" cy="6" r="2.600" fill="#f4c020" /><circle cx="14" cy="17" r="2.400" fill="#eaf6fc" />
      <path d="M20 9 H26 L25 15 H21Z" fill="#f0d8b0" /><rect x="21.500" y="14" width="3" height="16" rx="1" fill="#b06818" />
    </g>
  ) },
  { name: 'uTorrent', run: true, art: (
    <g>
      <circle cx="15" cy="15" r="15" fill="#5fa838" />
      <path d="M5 9 L10 8 L12.500 17 C13.500 21 17.500 20 17 16 L15 7 L20 6 L22.500 15 C23.500 18 25 19 28.500 18 C27.500 20.500 25 22.500 21 22 C19.500 24.500 15 25.500 12.500 24 L13.500 29.500 L9 28Z" fill="#fff" />
    </g>
  ) },
  { name: 'REW', active: true, art: (
    <g>
      <rect width="30" height="30" fill="#340878" />
      <path d="M3 27 L5 12 L8 22 L12 21 L15 13 L18 21 L30 20 V28 H3Z" fill="#18a8a0" />
      <path d="M4 26 L5 15 L8 23 L14 22 L15 16 L17 22 L29 22 V26Z" fill="#70d820" />
      <path d="M4 23.500 h6 M14 23.500 h4" stroke="#f04010" strokeWidth="2.400" />
      <text x="15" y="11.500" fontSize="11.500" fontWeight="700" textAnchor="middle" fill="#ddd" fontFamily="Liberation Sans">REW</text>
    </g>
  ) },
  { name: 'Explorer', run: true, art: (
    <g>
      <path d="M0 4 Q0 2 2 2 H9 L12 5 H15 V10 H0Z" fill="#d89a10" />
      <rect x="0" y="6" width="30" height="22" rx="1.500" fill="#fbc83a" />
      <path d="M5 28 V23 Q5 21 7 21 H23 Q25 21 25 23 V28Z" fill="#1674c8" /><path d="M9 24.500 H21" stroke="#0c4c90" strokeWidth="1.500" />
    </g>
  ) },
  { name: 'Edge', run: true, art: (
    <g>
      <defs><linearGradient id="edg" x1="0" y1="0" x2="1" y2="0"><stop offset="0" stopColor="#1c90d8" /><stop offset="1" stopColor="#60d860" /></linearGradient></defs>
      <path d="M0 15 A15 15 0 0 1 30 13 C30 20 22 21 19 19 C18 18 20 17 20 14 C19 8 10 6 4 11Z" fill="url(#edg)" />
      <path d="M0 16 C0 8 12 7 15 11 C9 12 9 21 15 24 C19 26 24 25 28 22 C24 29 19 30 15 30 C7 30 0 24 0 16Z" fill="#1872cc" />
      <path d="M10 17 C10 23 17 28 28 22 C25 28 20 30 16 30 C11 28 8 22 10 17Z" fill="#104f98" />
    </g>
  ) },
  { name: 'HOLM', run: true, art: (
    <g>
      <rect width="30" height="30" fill="#d4d0c8" />
      <text x="1" y="8" fontSize="5" fontWeight="700" fill="#111" fontFamily="Liberation Sans">HOLM</text>
      <text x="1" y="13" fontSize="4.500" fontWeight="700" fill="#111" fontFamily="Liberation Sans">Impulse</text>
      <path d="M0 15.500 H16 L18 18 L19 4 L21 24 L22.500 13 L24 17 L26 15 L30 15.500" fill="none" stroke="#3838b0" />
    </g>
  ) },
  { name: 'foobar2000', run: true, art: (
    <g>
      <path d="M5 1 C8 1 10 7 11 9 H19 C20 7 22 1 25 1 C27 5 26 12 26 16 C25 23 19 29 15 29 C11 29 5 23 4 16 C4 12 3 5 5 1Z" fill="#fff" stroke="#777" />
      <path d="M6 13 C11 13 13 16 13 21 C9 21 6 18 6 13Z M24 13 C19 13 17 16 17 21 C21 21 24 18 24 13Z" fill="#111" />
      <path d="M12 25 L15 23 L18 25 M15 23 V28" stroke="#222" fill="none" />
    </g>
  ) },
  { name: 'Capture tool', run: true, art: (
    <g>
      <rect width="15" height="30" fill="#fff" /><rect x="15" width="15" height="30" fill="#90f4f8" />
      <path d="M21 22 A9.500 9.500 0 1 1 22.500 11" fill="none" stroke="#f00000" strokeWidth="5" />
      <path d="M15 14 H29 L26 6Z" fill="#f00000" />
    </g>
  ) },
];

const TaskBar = () => (
  <div className="flex h-[60px] shrink-0 items-stretch border-t border-[#bdbdbd] bg-[#f2f2f2] pl-[14px] text-[#1a1a1a]">
    {APPS.map((a) => (
      <button key={a.name} aria-label={a.name} className="flex w-[55px] shrink-0 justify-center pt-[5px]">
        <span className={`flex h-[49px] w-[48px] flex-col items-center pt-[9px] ${a.active ? 'rounded-[5px] border border-[#e4e4e4] bg-[#fbfbfb]' : ''}`}>
          <svg viewBox="0 0 30 30" className="size-[30px] shrink-0">{a.art}</svg>
          {a.run && <span className="mt-[5px] h-[4px] w-[8px] shrink-0 rounded-full bg-[#8a8a8a]" />}
          {a.active && <span className="mt-[4px] h-[4px] w-[20px] shrink-0 rounded-full bg-[#0078d4]" />}
        </span>
      </button>
    ))}
    <div className="mr-[24px] ml-auto flex items-center">
      <svg viewBox="0 0 18 12" className="h-[12px] w-[18px]" fill="none" stroke="#222" strokeWidth="1.500"><path d="M1 10 L9 2 L17 10" /></svg>
      <svg viewBox="0 0 20 16" className="ml-[15px] h-[16px] w-[20px]" fill="none" stroke="#222" strokeWidth="1.500">
        <path d="M1 6 Q10 -3 19 6 M4 9 Q10 3 16 9 M7 12 Q10 9 13 12" /><circle cx="10" cy="14" r="1" fill="#222" />
      </svg>
      <svg viewBox="0 0 20 18" className="ml-[10px] h-[18px] w-[20px]" fill="none" stroke="#222" strokeWidth="1.400">
        <path d="M1 6 H4 L9 2 V16 L4 12 H1Z M12 6 Q14 9 12 12 M14.500 4 Q18 9 14.500 14" /><path d="M17 2 Q21 9 17 16" stroke="#bbb" />
      </svg>
      <svg viewBox="0 0 22 18" className="ml-[10px] h-[18px] w-[22px]">
        <rect x="4" y="5" width="15" height="11" rx="2" fill="none" stroke="#222" strokeWidth="1.500" /><rect x="5.500" y="7" width="12" height="7.500" fill="#222" />
        <path d="M20 8 h1.500 v4 h-1.500Z" fill="#222" /><path d="M4 0 L0 7 H3 L2 12 L7 5 H4Z" fill="#222" stroke="#f2f2f2" strokeWidth="0.500" />
      </svg>
      <div className="w-[86px] text-right leading-[20px]">
        <p>10:59 AM</p>
        <p>2/18/2025</p>
      </div>
      <span className="ml-[9px] flex size-5 items-center justify-center rounded-full bg-[#0067c0] text-[12px] text-white">1</span>
    </div>
  </div>
);

// ----------------------------------------------------
// App
// ----------------------------------------------------
const App = () => (
  <div className="relative flex h-screen flex-col overflow-hidden bg-[#f5f5f5] text-[14px] text-[#333]" style={{ fontFamily: '"Open Sans", "Noto Sans", sans-serif' }}>
    <div className="flex min-h-0 flex-1 flex-col border-t border-r border-[#d4d4d4]">
      <header className="relative flex h-[37px] shrink-0 items-center border-b border-[#dcdcdc] pl-[20px]">
        <nav className="flex gap-[20px]">
          {MENU.map((m) => <button key={m}>{m}</button>)}
        </nav>
        <h1 className="absolute left-1/2 -translate-x-1/2 text-[#a0a0a0]">REW V5.31.3</h1>
        <div className="ml-auto flex text-[#b8b8b8]">
          <button aria-label="Minimize" className="flex w-[55px] justify-center">
            <svg viewBox="0 0 14 14" className="size-[14px]" stroke="currentColor"><path d="M0 6.500 H13" /></svg>
          </button>
          <button aria-label="Restore" className="flex w-[55px] justify-center">
            <svg viewBox="0 0 14 14" className="size-[14px]" fill="none" stroke="currentColor"><rect x="1" y="3.500" width="9.500" height="9.500" rx="2" /><path d="M4 1 H10.500 Q13 1 13 3.500 V10" /></svg>
          </button>
          <button aria-label="Close" className="flex w-[55px] justify-center">
            <svg viewBox="0 0 14 14" className="size-[14px]" stroke="currentColor"><path d="M0.500 0.500 L13.500 13.500 M13.500 0.500 L0.500 13.500" /></svg>
          </button>
        </div>
      </header>
      <ToolBar />
      <div className="flex min-h-0 flex-1">
        <div className="flex w-[15px] shrink-0 flex-col items-center text-[#7c7c7c]">
          <Arrow dir="up" className="my-[2px]" />
          <div className="flex w-full flex-1 flex-col bg-white">
            <div className="mt-[284px] flex-1 bg-[#d8d8d8]" />
          </div>
          <Arrow dir="down" className="my-[2px]" />
        </div>
        <div className="w-[3px] shrink-0" />
        <MeasurementList />
        <GraphPane />
      </div>
      <StatusBar />
    </div>
    <TaskBar />
    <IrDialog />
    <div className="pointer-events-none absolute right-[83px] bottom-[105px] w-[283px] text-[#8c8c8c]/75">
      <p className="text-[24px] leading-[32px] whitespace-nowrap">Activate Windows</p>
      <p className="text-[17px] leading-[28px] whitespace-nowrap">Go to Settings to activate Windows.</p>
    </div>
  </div>
);

export default App;
